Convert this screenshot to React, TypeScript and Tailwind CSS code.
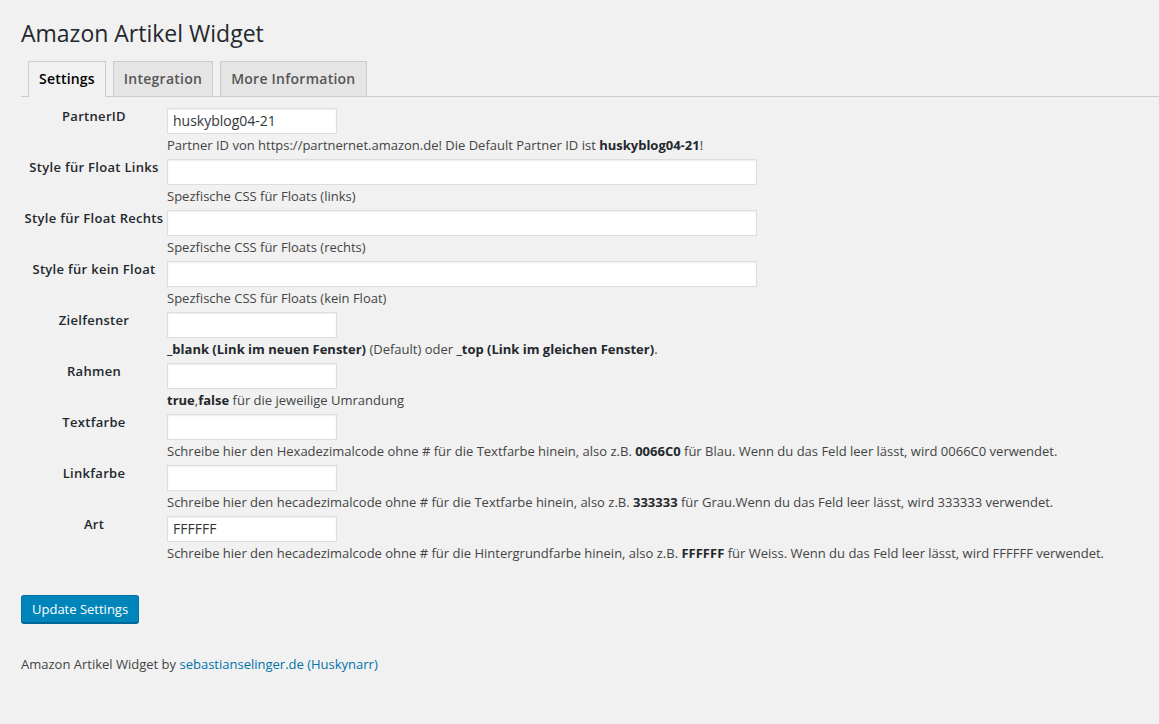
const rows: {
  label: string;
  value?: string;
  wide?: boolean;
  desc: React.ReactNode;
}[] = [
  {
    label: "PartnerID",
    value: "huskyblog04-21",
    desc: (
      <>
        Partner ID von https://partnernet.amazon.de! Die Default Partner ID ist{" "}
        <b>huskyblog04-21</b>!
      </>
    ),
  },
  { label: "Style für Float Links", wide: true, desc: "Spezfische CSS für Floats (links)" },
  { label: "Style für Float Rechts", wide: true, desc: "Spezfische CSS für Floats (rechts)" },
  { label: "Style für kein Float", wide: true, desc: "Spezfische CSS für Floats (kein Float)" },
  {
    label: "Zielfenster",
    desc: (
      <>
        <b>_blank (Link im neuen Fenster)</b> (Default) oder <b>_top (Link im gleichen Fenster)</b>.
      </>
    ),
  },
  {
    label: "Rahmen",
    desc: (
      <>
        <b>true</b>,<b>false</b> für die jeweilige Umrandung
      </>
    ),
  },
  {
    label: "Textfarbe",
    desc: (
      <>
        Schreibe hier den Hexadezimalcode ohne # für die Textfarbe hinein, also z.B. <b>0066C0</b> für
        Blau. Wenn du das Feld leer lässt, wird 0066C0 verwendet.
      </>
    ),
  },
  {
    label: "Linkfarbe",
    desc: (
      <>
        Schreibe hier den hecadezimalcode ohne # für die Textfarbe hinein, also z.B. <b>333333</b> für
        Grau.Wenn du das Feld leer lässt, wird 333333 verwendet.
      </>
    ),
  },
  {
    label: "Art",
    value: "FFFFFF",
    desc: (
      <>
        Schreibe hier den hecadezimalcode ohne # für die Hintergrundfarbe hinein, also z.B. <b>FFFFFF</b>{" "}
        für Weiss. Wenn du das Feld leer lässt, wird FFFFFF verwendet.
      </>
    ),
  },
];

const tabs = ["Settings", "Integration", "More Information"];

export default function App() {
  return (
    <div
      className="min-h-[724px] bg-[#f1f1f1] text-[13px] text-[#444]"
      style={{ fontFamily: '"Open Sans", "Liberation Sans", sans-serif' }}
    >
      <div className="pl-[21px]">
        <h1 className="pt-[19px] text-[23px] font-normal leading-[29px] text-[#23282d]">
          Amazon Artikel Widget
        </h1>

        <div className="mt-[13px] flex gap-[7px] border-b border-[#ccc] pl-[7px]">
          {tabs.map((t, i) => (
            <div
              key={t}
              className={
                i === 0
                  ? "-mb-px border border-b-0 border-[#ccc] bg-[#f1f1f1] px-[10px] pb-[6px] pt-[5px] text-[14px] font-semibold leading-[24px] tracking-[0.2px] text-black"
                  : "border border-b-0 border-[#ccc] bg-[#e5e5e5] px-[10px] pb-[5px] pt-[5px] text-[14px] font-semibold leading-[24px] tracking-[0.25px] text-[#555]"
              }
            >
              {t}
            </div>
          ))}
        </div>

        <div className="mt-[11px] flex flex-col">
          {rows.map((r) => (
            <div key={r.label} className="flex pb-[5px]">
              <div className="-mt-[1px] w-[146px] shrink-0 text-center font-semibold leading-[18px] tracking-[0.3px] text-[#23282d]">
                {r.label}
              </div>
              <div className="flex flex-col">
                <div
                  className={
                    (r.wide ? "w-[590px]" : "w-[170px]") +
                    " h-[26px] border border-[#ddd] bg-white px-[5px] text-[14px] leading-[24px] text-[#32373c] shadow-[inset_0_1px_2px_rgba(0,0,0,0.07)]"
                  }
                >
                  {r.value}
                </div>
                <div className="mt-[2px] whitespace-nowrap leading-[18px] text-[#444] [&_b]:font-bold [&_b]:text-[#23282d]">
                  {r.desc}
                </div>
              </div>
            </div>
          ))}
        </div>

        <div className="mt-[28px]">
          <button className="h-[28px] rounded-[3px] border border-[#0073aa] border-b-[#006799] bg-[#0085ba] px-[10px] text-[13px] leading-[26px] text-white shadow-[0_1px_0_#006799]">
            Update Settings
          </button>
        </div>

        <p className="mt-[32px] leading-[18px] text-[#444]">
          Amazon Artikel Widget by{" "}
          <a className="text-[#0073aa]">sebastianselinger.de (Huskynarr)</a>
        </p>
      </div>
    </div>
  );
}
